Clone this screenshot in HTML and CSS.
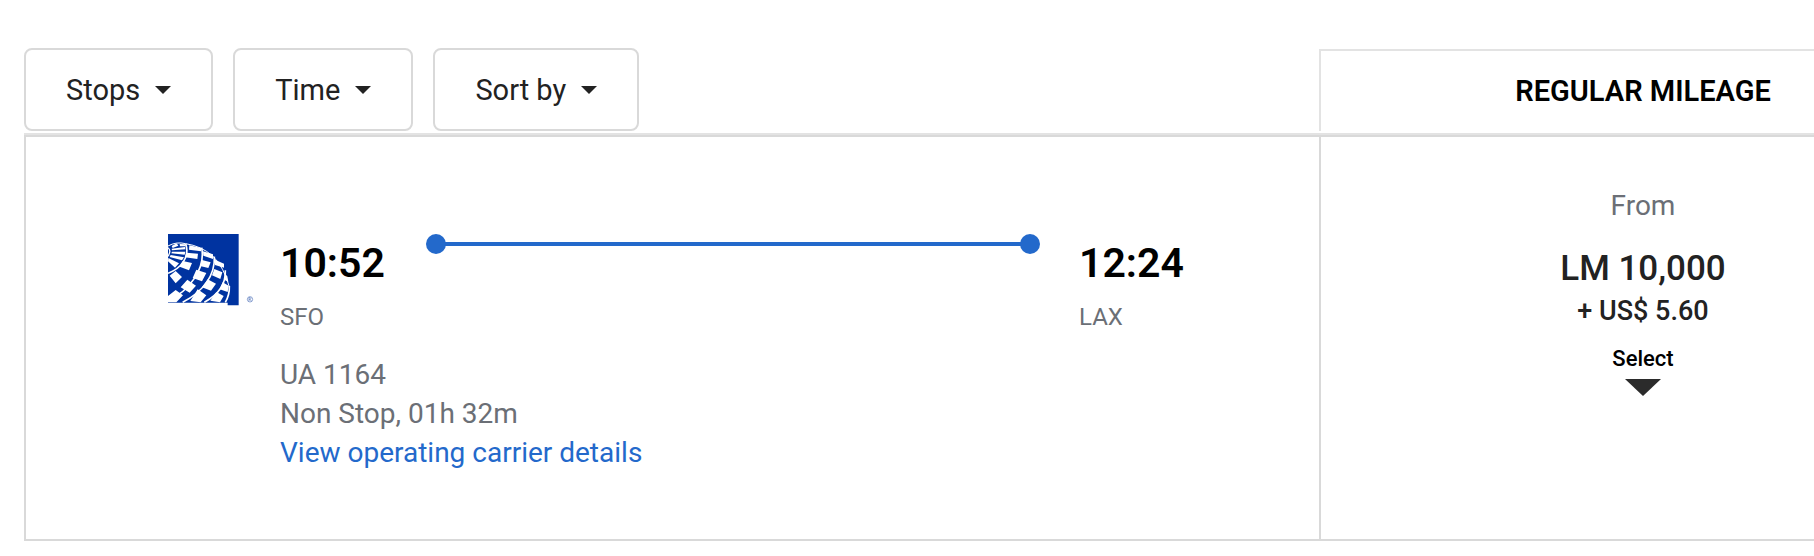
FILE: index.html
```html
<!DOCTYPE html>
<html lang="en">
  <head>
    <meta charset="UTF-8" />
    <meta name="viewport" content="width=device-width, initial-scale=1.0" />
    <title>Flights</title>
    <link rel="stylesheet" href="styles.css">
  </head>
  <body>
    <main class="results">
      <div class="results-header">
        <div class="filters">
          <button type="button" class="filter-btn" aria-haspopup="true">Stops <span class="caret"></span></button>
          <button type="button" class="filter-btn" aria-haspopup="true">Time <span class="caret"></span></button>
          <button type="button" class="filter-btn" aria-haspopup="true">Sort by <span class="caret"></span></button>
        </div>
        <h2 class="fare-title">REGULAR MILEAGE</h2>
      </div>

      <article class="flight">
        <div class="flight-info">
          <svg class="airline-logo" viewBox="39 42 258 216" aria-hidden="true">
            <path fill="#0033a0" d="M39 42H251V256H218V248H39Z" />
            <!-- globe meridians -->
            <g fill="none" stroke="#fff" stroke-width="5">
              <path d="M39 78Q64 64 92 71Q138 78 172 107Q207 140 224 204" stroke-width="3" />
              <path d="M39 83Q50 92 39 109" stroke-width="4" />
              <path d="M92 71C105 110 80 144 39 160" />
              <path d="M140 83C152 145 105 212 39 242" />
              <path d="M178 110C181 166 145 214 83 247" />
              <path d="M211 151C213 195 189 225 148 247" />
              <path d="M223 198Q224 225 211 247" />
            </g>
            <!-- checker patches -->
            <g fill="#fff">
              <path d="M50 78L65 70L70 77L53 84ZM74 72L91 73L92 79L75 79ZM50 86L90 81L91 88L51 91ZM51 95L91 95L89 104L49 100ZM47 105L87 112L81 121L44 111ZM40 114L72 130L60 143L39 124Z" />
              <path d="M103 76L139 84L138 94L102 89ZM94 98L129 101L127 117L90 112ZM83 123L111 129L102 151L74 140ZM62 153L81 171L62 190L44 167Z" />
              <path d="M144 94L174 103L174 117L145 107ZM141 120L167 127L160 144L135 138ZM124 149L154 159L141 184L113 174ZM97 179L123 197L104 218L77 202ZM62 210L84 226L64 247L39 247V228Z" />
              <path d="M180 119L207 131L207 143L180 135ZM178 147L202 157L196 177L171 166ZM158 178L183 191L168 212L141 202ZM128 208L154 226L137 247L106 243Z" />
              <path d="M209 160L217 169L220 186L209 180ZM203 187L221 197L218 216L194 208ZM184 216L206 228L195 247L166 242Z" />
            </g>
            <circle cx="285" cy="238" r="8" fill="none" stroke="#5778bd" stroke-width="2" />
            <path d="M282 243V233H286Q289 236 286 238H282M285 238L289 243" fill="none" stroke="#5778bd" stroke-width="2" />
          </svg>
          <div class="flight-body">
            <div class="route">
              <div class="stop departure">
                <time class="stop-time">10:52</time>
                <span class="stop-code">SFO</span>
              </div>
              <div class="route-line"></div>
              <div class="stop arrival">
                <time class="stop-time">12:24</time>
                <span class="stop-code">LAX</span>
              </div>
            </div>
            <div class="details">
              <p>UA 1164</p>
              <p>Non Stop, 01h 32m</p>
              <a href="#">View operating carrier details</a>
            </div>
          </div>
        </div>

        <div class="fare">
          <span class="fare-from">From</span>
          <span class="fare-miles">LM 10,000</span>
          <span class="fare-tax">+ US$ 5.60</span>
          <button type="button" class="select-btn">Select</button>
        </div>
      </article>
    </main>
  </body>
</html>
```
FILE: styles.css
```css
* {
  margin: 0;
  padding: 0;
  box-sizing: border-box;
}

body {
  background-color: #fff;
  color: #222;
  font-family: Roboto, "Liberation Sans", sans-serif;
  font-size: 28px;
}

.results {
  margin: 48px 0 0 24px;
}

.results-header,
.flight {
  display: grid;
  grid-template-columns: 1fr 495px;
}

.results-header {
  padding-bottom: 2px;
  border-bottom: 2px solid #e3e3e3;
}

.filters {
  display: flex;
  gap: 20px;
}

.filter-btn {
  display: flex;
  align-items: center;
  gap: 15px;
  height: 83px;
  padding: 0 40px;
  border: 2px solid #d9d9d9;
  border-radius: 8px;
  background-color: #fff;
  color: #222;
  font-family: inherit;
  font-size: 29px;
  cursor: pointer;
}

.caret {
  border: 8px solid transparent;
  border-top-color: #222;
  border-bottom: 0;
}

.fare-title {
  display: flex;
  align-items: center;
  justify-content: center;
  margin-top: 1px;
  padding-left: 151px;
  border: 2px solid #e3e3e3;
  border-width: 2px 0 0 2px;
  color: #000;
  font-size: 29px;
  font-weight: 600;
}

.flight {
  border: 2px solid #d9d9d9;
  border-right: 0;
}

.flight-info {
  display: flex;
  align-items: flex-start;
  gap: 26px;
  padding: 97px 0 67px 142px;
}

.airline-logo {
  flex: none;
  width: 86px;
  height: 72px;
}

.flight-body {
  flex: 1;
}

.route {
  display: flex;
}

.stop {
  display: flex;
  flex-direction: column;
}

.departure {
  width: 146px;
}

.arrival {
  width: 240px;
}

.stop-time {
  margin-top: 5px;
  color: #000;
  font-size: 41px;
  font-weight: 600;
  line-height: 48px;
}

.stop-code {
  margin-top: 14px;
  color: #6b6f76;
  font-size: 24px;
  line-height: 32px;
}

.route-line {
  flex: 1;
  display: flex;
  align-items: center;
  justify-content: space-between;
  height: 20px;
  margin-right: 39px;
  background: linear-gradient(#2369cb, #2369cb) center / calc(100% - 20px) 4px no-repeat;
}

.route-line::before,
.route-line::after {
  content: "";
  width: 20px;
  height: 20px;
  border-radius: 50%;
  background-color: #2369cb;
}

.details {
  margin-top: 22px;
  color: #6b6f76;
  line-height: 39px;
}

.details a {
  color: #2369cb;
  text-decoration: none;
}

.fare {
  display: flex;
  flex-direction: column;
  align-items: center;
  padding: 51px 0 0 151px;
  border-left: 2px solid #d9d9d9;
}

.fare-from {
  color: #6b6f76;
  line-height: 36px;
}

.fare-miles {
  margin-top: 23px;
  font-size: 35px;
  font-weight: 500;
  line-height: 44px;
}

.fare-tax {
  font-size: 27px;
  font-weight: 500;
  line-height: 40px;
}

.select-btn {
  display: flex;
  flex-direction: column;
  align-items: center;
  gap: 6px;
  margin-top: 14px;
  border: 0;
  background: none;
  color: #000;
  font-family: inherit;
  font-size: 22px;
  font-weight: 500;
  line-height: 28px;
  cursor: pointer;
}

.select-btn::after {
  content: "";
  border: 18px solid transparent;
  border-top: 17px solid #2b2b2b;
  border-bottom: 0;
}
```
